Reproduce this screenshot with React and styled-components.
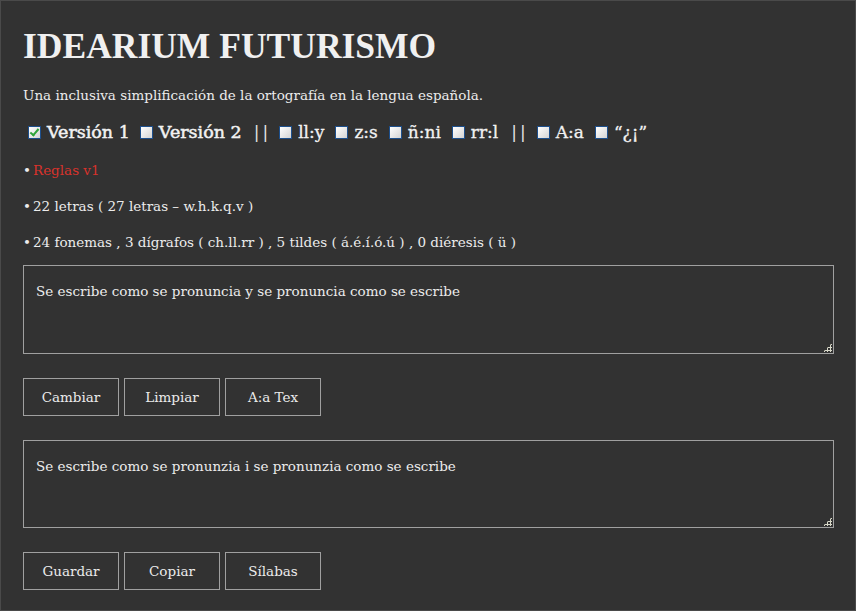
import React, { useState } from 'react'
import styled, { createGlobalStyle } from 'styled-components'

const GlobalStyle = createGlobalStyle`
  html, body {
    margin: 0;
    padding: 0;
    background: #323232;
  }
  * {
    box-sizing: border-box;
  }
`

const bodyFont = `'DejaVu Serif', 'Liberation Serif', serif`

const Page = styled.div`
  width: 856px;
  height: 611px;
  border: 1px solid #4a4a4a;
  background: #323232;
  color: #ececec;
  font-family: ${bodyFont};
  padding: 22px 22px 0 22px;
  overflow: hidden;
`

const Title = styled.h1`
  margin: 0;
  font-family: 'Liberation Serif', 'Times New Roman', serif;
  font-size: 35.5px;
  font-weight: bold;
  line-height: 46px;
  color: #f0f0f0;
`

const Subtitle = styled.p`
  margin: 16px 0 0 0;
  font-size: 13.5px;
  line-height: 20px;
`

const Options = styled.div`
  display: flex;
  align-items: center;
  margin-top: 14px;
  height: 26px;
  font-size: 17px;
  color: #f2f2f2;
`

const Option = styled.label`
  display: flex;
  align-items: center;
  gap: 6px;
  margin-right: ${(p) => (p.$strong ? 5 : 6)}px;
  font-size: ${(p) => (p.$strong ? 17.5 : 17)}px;
  -webkit-text-stroke: ${(p) => (p.$strong ? '0.5px' : '0.3px')} #f2f2f2;
  cursor: pointer;
`

const Box = styled.input`
  appearance: none;
  margin: 0 0 0 5px;
  width: 13px;
  height: 13px;
  border: 1px solid #1d4f8c;
  background: linear-gradient(135deg, #ffffff 0%, #d4d4d4 100%);
  position: relative;
  flex: none;

  &:checked::after {
    content: '';
    position: absolute;
    left: 3px;
    top: 0px;
    width: 3px;
    height: 7px;
    border: solid #2fa43a;
    border-width: 0 2px 2px 0;
    transform: rotate(40deg);
  }
`

const Separator = styled.span`
  margin: 0 3px 0 7px;
  color: #e6e6e6;
  font-weight: normal;
  letter-spacing: 3px;
`

const Bullets = styled.ul`
  list-style: none;
  margin: 15px 0 0 0;
  padding: 0;
`

const Bullet = styled.li`
  font-size: 13.5px;
  line-height: 20px;
  margin-bottom: 16px;
  color: ${(p) => (p.$accent ? '#d8322c' : '#ececec')};

  &:last-child {
    margin-bottom: 13px;
  }

  &::before {
    content: '•';
    color: #ececec;
    margin-right: 2px;
  }
`

const Field = styled.div`
  position: relative;
  width: 811px;
  margin-top: ${(p) => p.$top || 0}px;

  &::after {
    content: '';
    position: absolute;
    right: 2px;
    bottom: 2px;
    width: 9px;
    height: 9px;
    pointer-events: none;
    background:
      radial-gradient(circle, #d8d8c8 1.2px, transparent 1.4px) 0 0 / 3px 3px;
    clip-path: polygon(100% 0, 100% 100%, 0 100%);
  }
`

const TextBox = styled.textarea`
  display: block;
  width: 100%;
  height: ${(p) => p.$height || 89}px;
  resize: none;
  background: #323232;
  color: #ececec;
  border: 1px solid #a0a0a0;
  padding: 15px 12px;
  font-family: ${bodyFont};
  font-size: 13.5px;
  line-height: 20px;
  outline: none;
`

const Buttons = styled.div`
  display: flex;
  gap: 5px;
  margin-top: 24px;
`

const Button = styled.button`
  width: 96px;
  height: 38px;
  background: #323232;
  color: #ececec;
  border: 1px solid #a0a0a0;
  font-family: ${bodyFont};
  font-size: 13.5px;
  cursor: pointer;
  padding: 0;
`

const options = [
  { key: 'v1', label: 'Versión 1', strong: true },
  { key: 'v2', label: 'Versión 2', strong: true, sepAfter: true },
  { key: 'lly', label: 'll:y' },
  { key: 'zs', label: 'z:s' },
  { key: 'nni', label: 'ñ:ni' },
  { key: 'rrl', label: 'rr:l', sepAfter: true },
  { key: 'aa', label: 'A:a' },
  { key: 'q', label: '“¿¡”' },
]

function App() {
  const [checked, setChecked] = useState({ v1: true })
  const [input, setInput] = useState(
    'Se escribe como se pronuncia y se pronuncia como se escribe'
  )
  const [output, setOutput] = useState(
    'Se escribe como se pronunzia i se pronunzia como se escribe'
  )

  const toggle = (key) => setChecked((c) => ({ ...c, [key]: !c[key] }))

  return (
    <>
      <GlobalStyle />
      <Page>
        <Title>IDEARIUM FUTURISMO</Title>
        <Subtitle>
          Una inclusiva simplificación de la ortografía en la lengua española.
        </Subtitle>
        <Options>
          {options.map((o) => (
            <React.Fragment key={o.key}>
              <Option $strong={o.strong}>
                <Box
                  type="checkbox"
                  checked={!!checked[o.key]}
                  onChange={() => toggle(o.key)}
                />
                {o.label}
              </Option>
              {o.sepAfter && <Separator>||</Separator>}
            </React.Fragment>
          ))}
        </Options>
        <Bullets>
          <Bullet $accent>Reglas v1</Bullet>
          <Bullet>22 letras ( 27 letras – w.h.k.q.v )</Bullet>
          <Bullet>
            24 fonemas , 3 dígrafos ( ch.ll.rr ) , 5 tildes ( á.é.í.ó.ú ) , 0
            diéresis ( ü )
          </Bullet>
        </Bullets>
        <Field>
          <TextBox value={input} onChange={(e) => setInput(e.target.value)} />
        </Field>
        <Buttons>
          <Button>Cambiar</Button>
          <Button onClick={() => setInput('')}>Limpiar</Button>
          <Button>A:a Tex</Button>
        </Buttons>
        <Field $top={24}>
          <TextBox
            $height={88}
            value={output}
            onChange={(e) => setOutput(e.target.value)}
          />
        </Field>
        <Buttons>
          <Button>Guardar</Button>
          <Button>Copiar</Button>
          <Button>Sílabas</Button>
        </Buttons>
      </Page>
    </>
  )
}

export default App
